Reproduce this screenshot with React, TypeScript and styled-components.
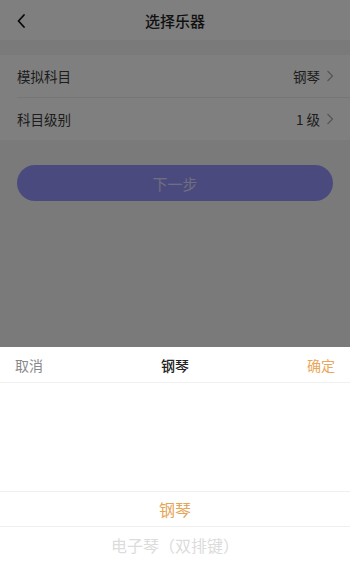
import styled, { createGlobalStyle } from "styled-components";

const Global = createGlobalStyle`
  html, body { margin: 0; padding: 0; }
  body {
    font-family: "Noto Sans CJK SC", "Noto Sans", sans-serif;
    background: #f5f5f5;
  }
`;

const Screen = styled.div`
  position: relative;
  width: 350px;
  height: 563px;
  overflow: hidden;
  background: #f5f5f5;
`;

const Header = styled.div`
  height: 40px;
  display: flex;
  align-items: center;
  justify-content: center;
  position: relative;
  background: #fff;
  font-size: 15px;
  font-weight: 500;
  color: #222;
`;

const Back = styled.div`
  position: absolute;
  left: 14px;
  top: 12px;
  width: 16px;
  height: 16px;
`;

const Group = styled.div`
  margin-top: 15px;
  background: #fff;
  padding-left: 17px;
`;

const Row = styled.div<{ last?: boolean }>`
  height: 42px;
  display: flex;
  align-items: center;
  justify-content: space-between;
  padding-right: 16px;
  border-bottom: ${(p) => (p.last ? "none" : "1px solid #ececec")};
  font-size: 13.5px;
  color: #3a3a3a;
`;

const Value = styled.span`
  display: flex;
  align-items: center;
  gap: 6px;
  color: #3a3a3a;
`;

const NextButton = styled.div`
  margin: 25px 17px 0;
  height: 36px;
  border-radius: 18px;
  background: #9695fd;
  color: rgba(255, 255, 255, 0.7);
  display: flex;
  align-items: center;
  justify-content: center;
  font-size: 15px;
`;

const Mask = styled.div`
  position: absolute;
  inset: 0;
  background: rgba(0, 0, 0, 0.5);
`;

const Sheet = styled.div`
  position: absolute;
  left: 0;
  right: 0;
  bottom: 0;
  height: 216px;
  background: #fff;
  display: flex;
  flex-direction: column;
`;

const SheetBar = styled.div`
  height: 36px;
  display: flex;
  align-items: center;
  justify-content: space-between;
  padding: 0 15px;
  border-bottom: 1px solid #f0f0f0;
  font-size: 14px;
`;

const BarButton = styled.span<{ tone: string }>`
  color: ${(p) => p.tone};
  width: 40px;
  &:last-child { text-align: right; }
`;

const BarTitle = styled.span`
  color: #222;
  font-size: 14px;
  font-weight: 500;
`;

const Picker = styled.div`
  flex: 1;
  padding-top: 108px;
  display: flex;
  flex-direction: column;
`;

const Option = styled.div<{ selected?: boolean }>`
  height: 36px;
  flex-shrink: 0;
  display: flex;
  align-items: center;
  justify-content: center;
  font-size: 16px;
  color: ${(p) => (p.selected ? "#e5a559" : "#dcdcdc")};
  border-top: ${(p) => (p.selected ? "1px solid #efefef" : "none")};
  border-bottom: ${(p) => (p.selected ? "1px solid #efefef" : "none")};
  box-sizing: border-box;
`;

const Chevron = () => (
  <svg width="8" height="12" viewBox="0 0 8 12">
    <path d="M1.5 1l5 5-5 5" fill="none" stroke="#aaa" strokeWidth="1.2" />
  </svg>
);

export default function App() {
  return (
    <Screen>
      <Global />
      <Header>
        <Back>
          <svg width="16" height="16" viewBox="0 0 16 16">
            <path d="M10 2L4.5 8l5.5 6" fill="none" stroke="#111" strokeWidth="1.8" strokeLinecap="round" strokeLinejoin="round" />
          </svg>
        </Back>
        选择乐器
      </Header>
      <Group>
        <Row>
          模拟科目
          <Value>
            钢琴 <Chevron />
          </Value>
        </Row>
        <Row last>
          科目级别
          <Value>
            1 级 <Chevron />
          </Value>
        </Row>
      </Group>
      <NextButton>下一步</NextButton>
      <Mask />
      <Sheet>
        <SheetBar>
          <BarButton tone="#888">取消</BarButton>
          <BarTitle>钢琴</BarTitle>
          <BarButton tone="#eaa65a">确定</BarButton>
        </SheetBar>
        <Picker>
          <Option selected>钢琴</Option>
          <Option>电子琴（双排键）</Option>
        </Picker>
      </Sheet>
    </Screen>
  );
}
